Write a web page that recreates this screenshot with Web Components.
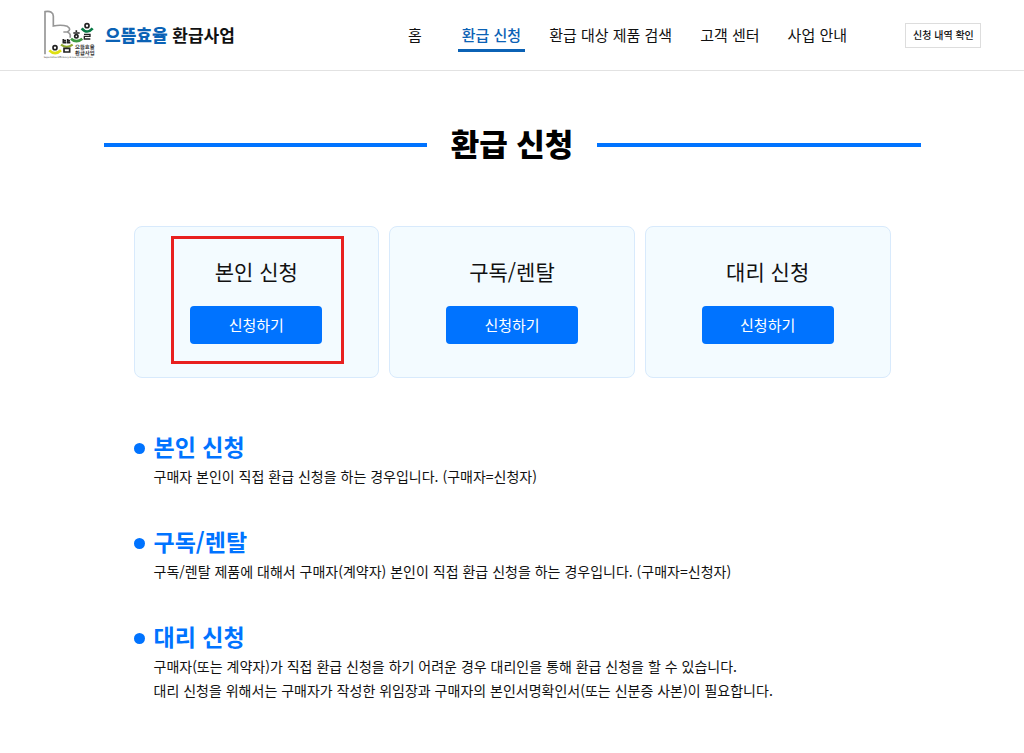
<!DOCTYPE html>
<html lang="ko">
<head>
<meta charset="utf-8">
<meta name="viewport" content="width=device-width, initial-scale=1">
<title>으뜸효율 환급사업 - 환급 신청</title>
<style>
body{margin:0;background:#fff;color:#111;font-family:"Noto Sans CJK KR",sans-serif;font-size:14px;line-height:24px}
</style>
</head>
<body>
<refund-page></refund-page>
<script>
class Base extends HTMLElement{
  connectedCallback(){
    if(this.shadowRoot)return;
    this.attachShadow({mode:"open"}).innerHTML=this.render();
  }
}
customElements.define("brand-logo",class extends Base{render(){return `
<style>
:host{display:block}
a{display:flex;align-items:center;gap:8px;color:#111;text-decoration:none;font-size:17px;font-weight:700;line-height:24px;white-space:nowrap}
b{color:#0b62b5}
svg{display:block;flex:none}
svg text{font-family:"Noto Sans CJK KR",sans-serif;text-rendering:geometricPrecision}
</style>
<a href="#"><svg width="54" height="50" viewBox="21 15 162 150" fill="none" aria-hidden="true">
<path d="M27 148V20Q52 16 52 34V63Q76 58 94 64Q108 73 94 81H82M94 81Q106 86 102 98" stroke="#969696" stroke-width="5"/>
<path d="M40 136Q57 153 75 136" stroke="#dfe012" stroke-width="8"/>
<circle cx="57" cy="128" r="6" stroke="#222" stroke-width="5"/>
<path d="M75 119Q92 132 110 119" stroke="#8fa92c" stroke-width="7"/>
<path d="M82 102V113H91M82 107H90M95 102V113H103M95 107H102M84 130H101V141H84Z" stroke="#222" stroke-width="5"/>
<path d="M105 101Q121 116 139 101" stroke="#3f9a43" stroke-width="8"/>
<path d="M121 76V81M112 84H131" stroke="#222" stroke-width="5"/>
<circle cx="121" cy="94" r="5" stroke="#222" stroke-width="5"/>
<path d="M137 70Q153 89 170 70" stroke="#087a45" stroke-width="8"/>
<circle cx="153" cy="62" r="6" stroke="#222" stroke-width="5"/>
<path d="M144 88H162V94H145V102H163" stroke="#222" stroke-width="4"/>
<text x="117" y="132" font-size="16" font-weight="700" fill="#333">으뜸효율</text>
<text x="117" y="150" font-size="16" font-weight="700" fill="#333">환급사업</text>
<text x="23" y="160" font-size="7" fill="#777">Superlative Efficiency &amp; Low Consumption</text>
</svg><span><b>으뜸효율</b> 환급사업</span></a>`}});

customElements.define("nav-link",class extends Base{render(){return `
<style>
:host{display:block}
a{display:block;padding:5px 4px 2px;border-bottom:3px solid transparent;color:#111;text-decoration:none;font-size:15px;line-height:24px;white-space:nowrap}
:host([current]) a{color:#0b62b5;border-color:#0b62b5;font-weight:500}
</style><a href="#"><slot></slot></a>`}});

customElements.define("site-header",class extends Base{render(){return `
<style>
:host{display:block;border-bottom:1px solid #e2e2e2}
header{display:flex;align-items:center;justify-content:space-between;min-height:70px;padding:0 43px;box-sizing:border-box}
.right{display:flex;align-items:center;gap:54px}
nav{display:flex;gap:20px}
.home{margin-right:12px}
button{font:500 10px/16px "Noto Sans CJK KR",sans-serif;color:#111;background:#fff;border:1px solid #ddd;padding:3px 7px 4px;width:76px;white-space:nowrap}
</style>
<header><brand-logo></brand-logo>
<div class="right"><nav><nav-link class="home">홈</nav-link><nav-link current>환급 신청</nav-link><nav-link>환급 대상 제품 검색</nav-link><nav-link>고객 센터</nav-link><nav-link>사업 안내</nav-link></nav>
<button type="button">신청 내역 확인</button></div></header>`}});

customElements.define("page-title",class extends Base{render(){return `
<style>
:host{display:flex;align-items:center;gap:24px}
:host::before,:host::after{content:"";flex:1;height:4px;background:#0073ff}
h1{margin:0;padding-bottom:4px;font-size:31px;line-height:44px;font-weight:900;color:#000;white-space:nowrap}
</style><h1><slot></slot></h1>`}});

customElements.define("apply-card",class extends Base{render(){return `
<style>
:host{display:flex;flex-direction:column;align-items:center;gap:19px;position:relative;box-sizing:border-box;padding:28px 0 33px;background:#f3fbff;border:1px solid #d8eafc;border-radius:8px}
h2{margin:0;font-size:21px;line-height:32px;font-weight:400;color:#111}
button{width:132px;padding:7px 0;border:0;border-radius:4px;background:#0073ff;color:#fff;font:400 15px/24px "Noto Sans CJK KR",sans-serif}
:host([marked])::after{content:"";position:absolute;inset:9px 34px 13px 36px;border:3px solid #e8201f;pointer-events:none}
</style><h2><slot></slot></h2><button type="button">신청하기</button>`}});

customElements.define("info-item",class extends Base{render(){return `
<style>
:host{display:grid;grid-template-columns:11px 1fr;column-gap:9px;align-items:center}
.dot{width:11px;height:11px;margin-top:2px;border-radius:50%;background:#0073ff}
h2{margin:0;padding-bottom:2px;font-size:23px;line-height:32px;font-weight:700;color:#0073ff}
div{grid-column:2}
</style><span class="dot"></span><h2><slot name="title"></slot></h2><div><slot></slot></div>`}});

customElements.define("refund-page",class extends Base{render(){return `
<style>
:host{display:block}
main{max-width:817px;margin:0 auto;padding:50px 0 49px}
.cards{display:grid;grid-template-columns:repeat(3,1fr);gap:10px;margin:57px 30px 0}
.info{display:flex;flex-direction:column;gap:37px;margin:52px 30px 0}
p{margin:0}
</style>
<site-header></site-header>
<main><page-title>환급 신청</page-title>
<div class="cards"><apply-card marked>본인 신청</apply-card><apply-card>구독/렌탈</apply-card><apply-card>대리 신청</apply-card></div>
<div class="info">
<info-item><span slot="title">본인 신청</span><p>구매자 본인이 직접 환급 신청을 하는 경우입니다. (구매자=신청자)</p></info-item>
<info-item><span slot="title">구독/렌탈</span><p>구독/렌탈 제품에 대해서 구매자(계약자) 본인이 직접 환급 신청을 하는 경우입니다. (구매자=신청자)</p></info-item>
<info-item><span slot="title">대리 신청</span><p>구매자(또는 계약자)가 직접 환급 신청을 하기 어려운 경우 대리인을 통해 환급 신청을 할 수 있습니다.</p><p>대리 신청을 위해서는 구매자가 작성한 위임장과 구매자의 본인서명확인서(또는 신분증 사본)이 필요합니다.</p></info-item>
</div></main>`}});
</script>
</body>
</html>
